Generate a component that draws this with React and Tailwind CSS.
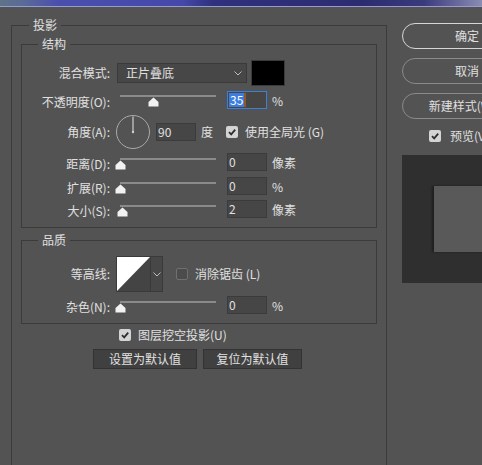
import React from "react";

const Chevron = () => (
  <svg width="8" height="5" viewBox="0 0 8 5" className="shrink-0">
    <path d="M0.5 0.5 L4 4 L7.5 0.5" fill="none" stroke="#bdbdbd" strokeWidth="1" />
  </svg>
);

const CheckBox = ({ checked }) =>
  checked ? (
    <div className="w-[12px] h-[12px] shrink-0 rounded-[2px] bg-[#d4d4d4] flex items-center justify-center">
      <svg width="10" height="10" viewBox="0 0 10 10">
        <path d="M2 5.2 L4.2 7.4 L8.2 2.6" fill="none" stroke="#2e2e2e" strokeWidth="1.8" />
      </svg>
    </div>
  ) : (
    <div className="w-[12px] h-[12px] shrink-0 rounded-[2px] border border-[#707070] bg-[#4c4c4c]" />
  );

const Slider = ({ center }) => (
  <div className="relative w-[96px] h-[13px] shrink-0">
    <div className="absolute left-0 right-0 top-0 h-[2px] bg-[#8a8a8a]" />
    <svg
      className="absolute top-[2px]"
      style={{ left: center - 5.5 }}
      width="11"
      height="10"
      viewBox="0 0 11 10"
    >
      <path d="M5.5 0.5 L10.5 5 V9.5 H0.5 V5 Z" fill="#f2f2f2" />
    </svg>
  </div>
);

const Input = ({ children, className = "" }) => (
  <div
    className={
      "w-[40px] h-[18px] shrink-0 bg-[#464646] border border-[#3b3b3b] pl-[1px] flex items-center " +
      className
    }
  >
    {children}
  </div>
);

const SliderRow = ({ label, center, value, unit, mt }) => (
  <div className={"flex items-start h-[18px] " + mt}>
    <div className="w-[88px] text-right mt-[4px] shrink-0">{label}</div>
    <div className="ml-[10px] mt-[5px]">
      <Slider center={center} />
    </div>
    <Input className="ml-[11px]">{value}</Input>
    <div className="ml-[5px] mt-[3px]">{unit}</div>
  </div>
);

export default function App() {
  return (
    <div className="w-[482px] h-[465px] overflow-hidden bg-[#535353] text-[#e0e0e0] text-[12px] leading-[14px] font-['Noto_Sans_CJK_SC','Noto_Sans',sans-serif]">
      <div className="h-[7px] border-b border-[#9a9ad2] bg-[linear-gradient(to_right,#5f7389_0%,#5a6a98_5%,#4a4fae_12%,#4548a8_38%,#30317e_44%,#2b2c70_75%,#3a3b7c_88%,#8a8cb4_100%)]" />
      <div className="flex pl-[11px] pt-[11px]">
        <fieldset className="w-[376px] h-[460px] shrink-0 border border-[#3b3b3b] px-[9px] pt-[5px]">
          <legend className="ml-[8px] px-[4px] leading-[14px]">投影</legend>

          <fieldset className="border border-[#3b3b3b] pb-[9px]">
            <legend className="ml-[16px] px-[4px] leading-[14px]">结构</legend>

            <div className="flex items-center h-[26px] mt-[9px]">
              <div className="w-[88px] text-right shrink-0">混合模式:</div>
              <div className="ml-[7px] w-[130px] h-[20px] shrink-0 bg-[#474747] border border-[#3a3a3a] flex items-center justify-between pl-[8px] pr-[4px]">
                <span>正片叠底</span>
                <Chevron />
              </div>
              <div className="ml-[4px] w-[34px] h-[26px] shrink-0 bg-black border border-[#3a3a3a]" />
            </div>

            <div className="flex items-start h-[18px] mt-[5px]">
              <div className="w-[88px] text-right mt-[4px] shrink-0">不透明度(O):</div>
              <div className="ml-[10px] mt-[4px]">
                <Slider center={33.5} />
              </div>
              <div className="ml-[11px] w-[40px] h-[18px] shrink-0 bg-[#464646] border border-[#3d7fd8] pl-[1px] flex items-center">
                <span className="bg-[#3b7de2] text-white px-[1px] leading-[14px]">35</span>
                <span className="w-[2px] h-[14px] bg-[#8a5a2a]" />
              </div>
              <div className="ml-[5px] mt-[3px]">%</div>
            </div>

            <div className="flex items-center h-[34px] mt-[6px]">
              <div className="w-[88px] text-right shrink-0">角度(A):</div>
              <svg className="ml-[6px] shrink-0" width="34" height="34" viewBox="0 0 34 34">
                <circle cx="17" cy="17" r="16.5" fill="none" stroke="#a9a9a9" strokeWidth="1" />
                <line x1="17" y1="17" x2="17" y2="1.5" stroke="#cfcfcf" strokeWidth="1.2" />
                <circle cx="17" cy="17" r="1.2" fill="#cfcfcf" />
              </svg>
              <Input className="ml-[6px]">90</Input>
              <div className="ml-[5px]">度</div>
              <div className="ml-[13px]">
                <CheckBox checked />
              </div>
              <div className="ml-[7px]">使用全局光 (G)</div>
            </div>

            <SliderRow label="距离(D):" center={0} value="0" unit="像素" mt="mt-[4px]" />
            <SliderRow label="扩展(R):" center={0} value="0" unit="%" mt="mt-[6px]" />
            <SliderRow label="大小(S):" center={2.5} value="2" unit="像素" mt="mt-[5px]" />
          </fieldset>

          <fieldset className="mt-[5px] border border-[#3b3b3b] pb-[9px]">
            <legend className="ml-[16px] px-[4px] leading-[14px]">品质</legend>

            <div className="flex items-center h-[36px] mt-[9px]">
              <div className="w-[88px] text-right shrink-0">等高线:</div>
              <div className="ml-[6px] flex h-[36px] border border-[#3a3a3a] shrink-0">
                <svg width="33" height="34" viewBox="0 0 33 34" className="block">
                  <rect width="33" height="34" fill="#444444" />
                  <polygon points="0,0 33,0 0,34" fill="#ffffff" />
                </svg>
                <div className="w-[12px] bg-[#474747] border-l border-[#3a3a3a] flex items-center justify-center">
                  <Chevron />
                </div>
              </div>
              <div className="ml-[13px]">
                <CheckBox />
              </div>
              <div className="ml-[7px]">消除锯齿 (L)</div>
            </div>

            <SliderRow label="杂色(N):" center={0} value="0" unit="%" mt="mt-[4px]" />
          </fieldset>

          <div className="flex items-center h-[14px] mt-[4px] pl-[98px]">
            <CheckBox checked />
            <div className="ml-[7px]">图层挖空投影(U)</div>
          </div>

          <div className="flex mt-[7px] pl-[72px]">
            <div className="w-[104px] h-[20px] bg-[#404040] border border-[#333333] flex items-center justify-center">
              设置为默认值
            </div>
            <div className="ml-[6px] w-[99px] h-[20px] bg-[#404040] border border-[#333333] flex items-center justify-center">
              复位为默认值
            </div>
          </div>
        </fieldset>

        <div className="ml-[15px] mt-[5px] w-[130px] shrink-0 flex flex-col">
          <div className="h-[26px] rounded-full border border-[#d6d6d6] flex items-center justify-center">
            确定
          </div>
          <div className="mt-[9px] h-[26px] rounded-full border border-[#8a8a8a] flex items-center justify-center">
            取消
          </div>
          <div className="mt-[9px] h-[26px] rounded-full border border-[#8a8a8a] flex items-center justify-center">
            新建样式(W)...
          </div>
          <div className="mt-[10px] h-[13px] flex items-center pl-[27px]">
            <CheckBox checked />
            <div className="ml-[9px]">预览(V)</div>
          </div>
          <div className="mt-[13px] h-[128px] bg-[#2f2f2f] flex items-center justify-center">
            <div className="w-[66px] h-[66px] bg-[#595959] shadow-[-2px_0_2px_rgba(0,0,0,0.35)]" />
          </div>
        </div>
      </div>
    </div>
  );
}
